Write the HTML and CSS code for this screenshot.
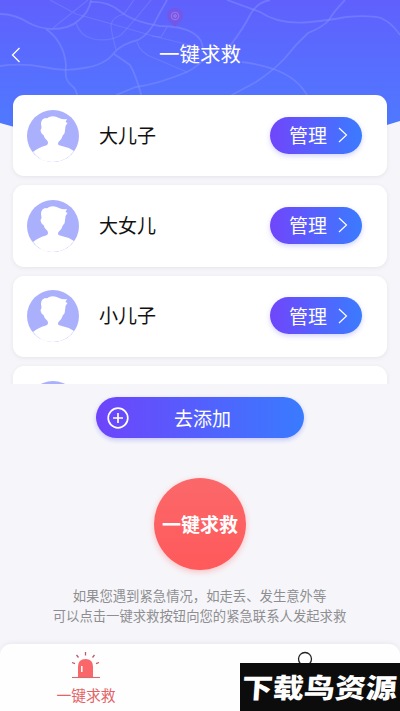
FILE: index.html
```html
<!DOCTYPE html>
<html lang="zh-CN">
<head>
<meta charset="utf-8">
<title>一键求救</title>
<link rel="stylesheet" href="styles.css">
</head>
<body>
<svg width="0" height="0" class="defs">
  <symbol id="avatar" viewBox="0 0 52 52">
    <circle cx="26" cy="26" r="26" fill="#abb0fc"/>
    <path d="M6 42Q12 37 19 35.500Q22 34 20.500 31Q17 28 16.500 25Q14 24 13.500 20Q14.500 19 14.500 17Q12.500 10 18 8Q20 9 22 7Q27 5 32 8Q36 10 40 9L38.500 12L40.500 13L38.500 16Q38.500 18 38 20Q38 24 36 25Q35 29 31.500 32Q30 35 33 35.500Q41 37 47 41Q39 52 26 52Q13 52 6 42Z" fill="#fff"/>
  </symbol>
  <symbol id="chevron" viewBox="0 0 10 16">
    <path d="M1 1L8.500 8L1 15" fill="none" stroke="#fff" stroke-width="1.200"/>
  </symbol>
</svg>
<div class="screen">
  <svg class="map" width="400" height="150" viewBox="0 0 400 150">
    <defs>
      <linearGradient id="sky" x1="0" y1="0" x2="0" y2="1"><stop offset="0" stop-color="#6060fd"/><stop offset=".8" stop-color="#5078ff"/></linearGradient>
    </defs>
    <path d="M0 0H400V121Q310 150 200 150T0 123Z" fill="url(#sky)"/>
    <g fill="none" stroke="#8290ff" stroke-opacity=".5" stroke-width="1.800">
      <path d="M0 14Q15 14 29 23Q38 28 51 29Q70 29 79 20Q89 12 91 0"/>
      <path d="M46 29Q64 42 66 65Q64 79 70 84Q78 90 77 98"/>
      <path d="M0 66Q22 63 43 67Q65 72 84 68Q105 65 114 53Q121 44 138 40Q150 34 158 16L167 0"/>
      <path d="M91 2Q108 1 121 12Q134 22 160 26Q182 26 193 33Q203 39 203 50"/>
      <path d="M114 54Q123 60 130 65Q136 75 142 98"/>
      <path d="M116 95L136 87Q158 84 187 72Q200 65 207 56"/>
      <path d="M227 0L260 12Q279 25 310 22Q331 20 346 17Q370 15 381 18Q392 23 400 35"/>
      <path d="M345 0Q334 11 329 20Q323 27 308 33Q296 44 285 58Q274 70 256 82L230 96"/>
      <path d="M242 62Q260 64 276 70Q299 79 308 97"/>
      <path d="M230 46Q243 29 250 15Q257 2 270 0"/>
    </g>
    <g fill="none" stroke="#8290ff" stroke-opacity=".4" stroke-width="1.200">
      <path d="M53 28L88 0M50 0L76 14L112 24L153 36L190 45"/>
      <path d="M76 23Q80 36 93 39Q110 42 121 35Q135 20 151 0"/>
      <path d="M116 50Q111 31 111 25Q112 17 124 14L134 0"/>
      <path d="M137 42Q140 53 154 58L187 72M167 27L161 37L152 36"/>
    </g>
    <path d="M175 27C171 23 167 20 167 16A8 8 0 0 1 183 16C183 20 179 23 175 27Z" fill="#8051dc" opacity=".65"/>
    <g fill="none" stroke="#a680ee"><circle cx="175" cy="16" r="3.800" stroke-width=".8"/><circle cx="175" cy="16" r="1.300"/></g>
  </svg>
  <header class="header">
    <svg class="back" width="10" height="16" viewBox="0 0 10 16"><path d="M8.500 1L1.500 8L8.500 15" fill="none" stroke="#fff" stroke-width="1.300"/></svg>
    <h1 class="title">一键求救</h1>
  </header>
  <main class="list">
    <div class="card"><svg class="avatar"><use href="#avatar"/></svg><span class="name">大儿子</span><button class="manage">管理<svg class="chevron"><use href="#chevron"/></svg></button></div>
    <div class="card"><svg class="avatar"><use href="#avatar"/></svg><span class="name">大女儿</span><button class="manage">管理<svg class="chevron"><use href="#chevron"/></svg></button></div>
    <div class="card"><svg class="avatar"><use href="#avatar"/></svg><span class="name">小儿子</span><button class="manage">管理<svg class="chevron"><use href="#chevron"/></svg></button></div>
    <div class="card"><svg class="avatar"><use href="#avatar"/></svg></div>
  </main>
  <section class="panel">
    <button class="add">
      <svg class="plus" width="22" height="22" viewBox="0 0 22 22" fill="none" stroke="#fff" stroke-width="1.700"><circle cx="11" cy="11" r="9.800"/><path d="M11 6V16M6 11H16"/></svg>
      去添加
    </button>
    <button class="sos">一键求救</button>
    <p class="hint">如果您遇到紧急情况，如走丢、发生意外等<br>可以点击一键求救按钮向您的紧急联系人发起求救</p>
  </section>
  <nav class="tabs">
    <div class="tab active">
      <svg width="30" height="30" viewBox="0 0 30 30"><path d="M7 26V15.500Q7 8 14.500 8T22 15.500V26Z" fill="#f9676b"/><path d="M1 26.500H29" stroke="#d36c70" stroke-width="1.100"/><path d="M10.800 15V21" stroke="#fff" stroke-width="1.500"/><path d="M14.500 1V4.500M5.500 4L7.500 6.500M23.500 4L21.500 6.500M1 11.500L4 12.700M28 11.500L25 12.700" stroke="#bd5b61" stroke-width="1.300"/></svg>
      <span>一键求救</span>
    </div>
    <div class="tab">
      <svg width="30" height="30" viewBox="0 0 30 30" fill="none" stroke="#222" stroke-width="1.300"><circle cx="15" cy="8" r="6.500"/><path d="M5 29Q5 18 15 18T25 29"/></svg>
      <span>我的</span>
    </div>
  </nav>
  <div class="watermark"><span class="brand">下载鸟资源</span></div>
</div>
</body>
</html>
```

FILE: styles.css
```css
* { box-sizing: border-box; }
body { margin: 0; font-family: "Noto Sans CJK SC", sans-serif; }
button { border: 0; padding: 0; color: #fff; font-family: inherit; }
.defs { position: absolute; }
.screen {
  position: relative;
  display: flex;
  flex-direction: column;
  width: 400px;
  height: 711px;
  overflow: hidden;
  background: #f6f6fa;
}
.map { position: absolute; top: 0; left: 0; }
.header {
  position: relative;
  display: flex;
  align-items: flex-start;
  flex: none;
  height: 95px;
  padding: 38px 11px 0;
}
.back { margin-top: 9px; }
.title {
  flex: 1;
  margin: 0 10px 0 0;
  color: #fff;
  font-size: 20.5px;
  font-weight: 400;
  line-height: 31px;
  text-align: center;
}
.list {
  position: relative;
  display: flex;
  flex-direction: column;
  gap: 9px;
  flex: none;
  height: 289px;
  padding: 0 13px;
  overflow: hidden;
}
.card {
  display: flex;
  flex: none;
  height: 81.4px;
  padding: 14.5px 25px 0 14px;
  border-radius: 11px;
  background: #fff;
  box-shadow: 0 1px 4px rgba(60, 60, 90, .1);
}
.avatar { width: 52px; height: 52px; }
.name {
  flex: 1;
  margin-left: 20px;
  color: #111;
  font-size: 19px;
  line-height: 50px;
}
.manage {
  display: flex;
  align-items: center;
  width: 92px;
  height: 37px;
  margin-top: 7px;
  padding: 0 0 1px 19px;
  border-radius: 19px;
  background: linear-gradient(90deg, #7046fb, #3b7bff);
  box-shadow: 0 2px 5px rgba(80, 80, 255, .25);
  font-size: 19px;
}
.chevron { width: 10px; height: 16px; margin: 1px 0 0 11px; }
.panel {
  position: relative;
  display: flex;
  flex-direction: column;
  align-items: center;
  flex: none;
  height: 260px;
  padding-top: 13px;
  background: #f6f6fa;
}
.add {
  display: flex;
  align-items: center;
  width: 208px;
  height: 41px;
  padding-left: 11px;
  border-radius: 21px;
  background: linear-gradient(90deg, #6e44fb, #397bff);
  box-shadow: 0 2px 5px rgba(80, 80, 255, .3);
  font-size: 19px;
}
.plus { margin-right: 45px; }
.sos {
  width: 92px;
  height: 92px;
  margin-top: 40px;
  padding-bottom: 2px;
  border-radius: 50%;
  background: linear-gradient(#fb686a, #ff595b);
  box-shadow: 0 2px 6px rgba(255, 90, 90, .35);
  font-size: 19px;
  font-weight: 700;
  white-space: nowrap;
}
.hint {
  margin: 16px 1px 0 0;
  color: #8e8e91;
  font-size: 13.35px;
  line-height: 20px;
  text-align: center;
  white-space: nowrap;
}
.tabs {
  position: relative;
  display: flex;
  flex: none;
  height: 67px;
  padding: 0 5px;
  border-radius: 11px 11px 0 0;
  background: #fefefe;
  box-shadow: 0 -1px 4px rgba(60, 60, 90, .08);
}
.tab {
  display: flex;
  flex: 1;
  flex-direction: column;
  align-items: center;
  padding-top: 7px;
  padding-right: 37px;
  color: #222;
  font-size: 14.8px;
  line-height: 22px;
}
.tab:last-child { padding-right: 0; padding-left: 11px; }
.tab span { margin-top: 3px; }
.tabs .active { flex: none; width: 199px; color: #e36468; }
.watermark {
  position: absolute;
  right: 0;
  bottom: 0;
  display: flex;
  align-items: center;
  justify-content: center;
  width: 160px;
  height: 48px;
  background: #0c0c0c;
}
.brand {
  margin-right: 2px;
  color: #fff;
  font-size: 31px;
  font-weight: 900;
  line-height: 46px;
  white-space: nowrap;
  transform: skewX(-4deg) scaleY(.88);
}
```
